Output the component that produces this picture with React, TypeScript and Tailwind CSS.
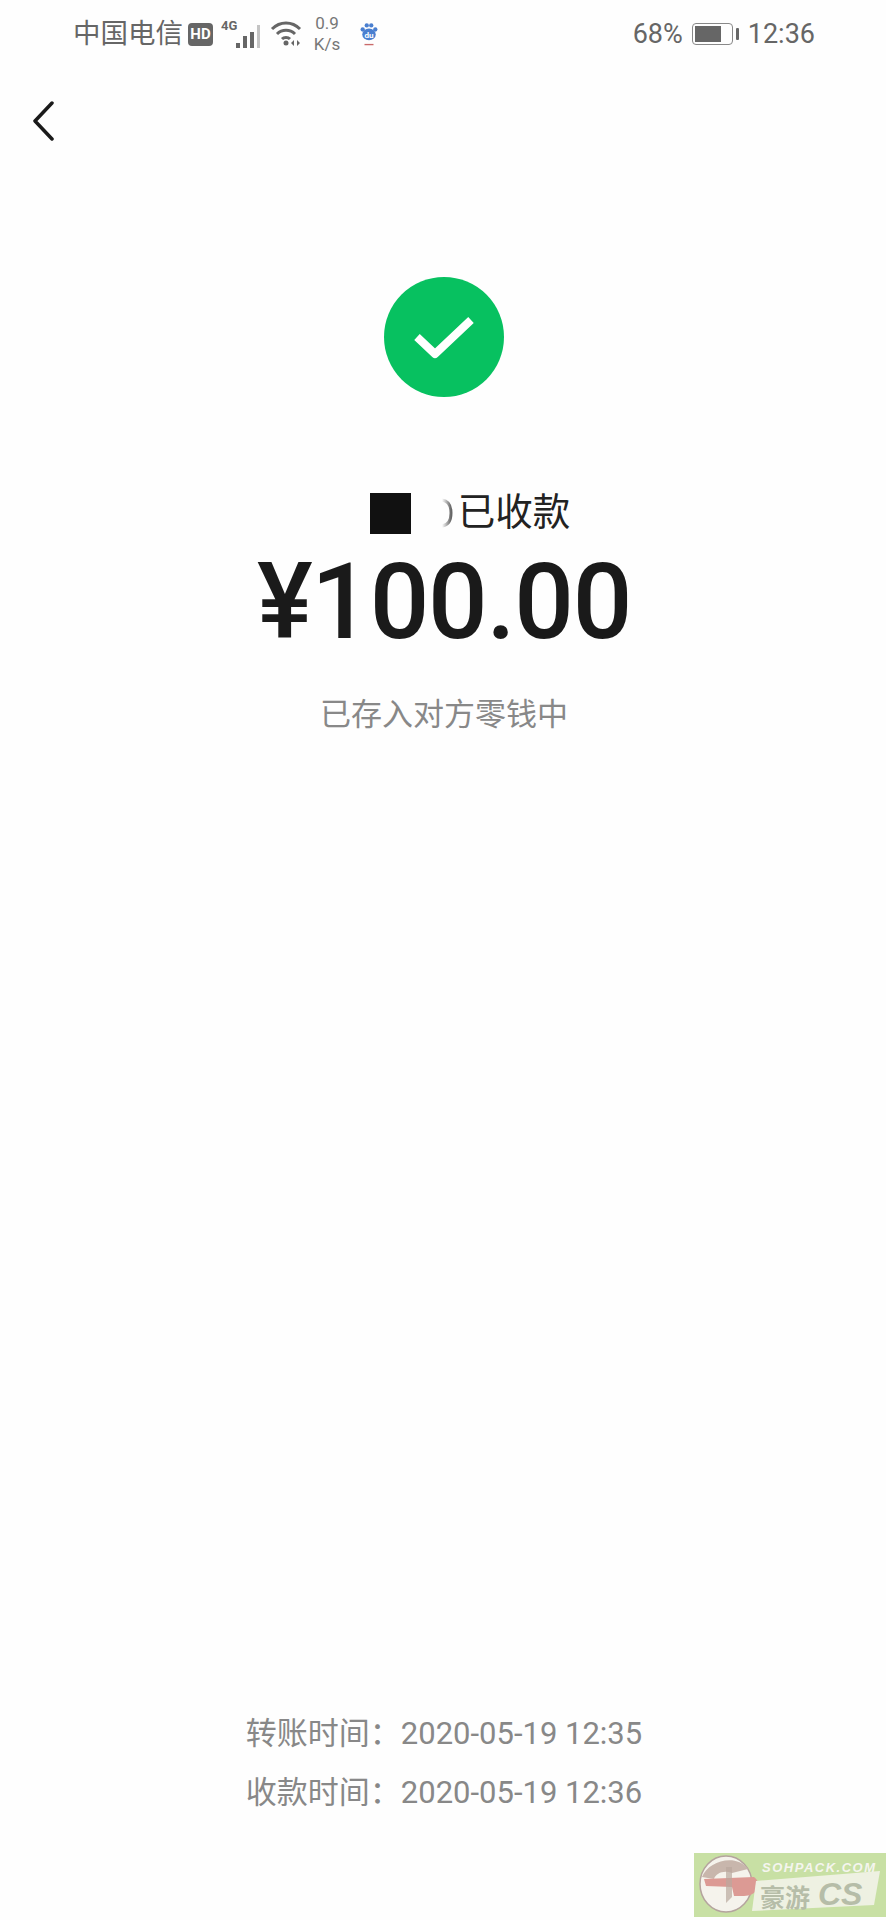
import React from "react";

const cjk = "font-['Roboto','Noto_Sans_CJK_SC',sans-serif]";

function StatusIcons() {
  return (
    <div className="flex items-center">
      {/* HD badge */}
      <div className="ml-[5px] flex h-[23px] w-[25px] items-center justify-center rounded-[4px] bg-[#666666] text-[15px] font-bold leading-none text-white">
        HD
      </div>
      {/* signal */}
      <svg width="42" height="30" viewBox="0 0 42 30" className="ml-[8px]">
        <text x="0" y="11" fontSize="13" fontWeight="700" fill="#666" fontFamily="Roboto">4G</text>
        <rect x="15" y="24" width="4" height="5" fill="#666" />
        <rect x="22" y="17" width="4" height="12" fill="#666" />
        <rect x="29" y="13" width="4" height="16" fill="#666" />
        <rect x="36" y="6" width="3" height="23" fill="#c4c4c4" />
      </svg>
      {/* wifi */}
      <svg width="32" height="26" viewBox="0 0 32 26" className="ml-[7px]">
        <path d="M2 8C10 0 22 0 30 8" fill="none" stroke="#666" strokeWidth="3" />
        <path d="M7 13C12 8 20 8 25 13" fill="none" stroke="#666" strokeWidth="3" />
        <path d="M12 18C14 16 18 16 20 18" fill="none" stroke="#666" strokeWidth="3" />
        <circle cx="16" cy="22" r="2.5" fill="#666" />
        <path d="M24 19l-3 3 3 3zM27 19l3 3-3 3z" fill="#666" />
      </svg>
      {/* speed */}
      <div className="ml-[10px] flex w-[30px] flex-col items-center text-[17px] leading-[21px] text-[#777777]">
        <span>0.9</span>
        <span>K/s</span>
      </div>
      {/* baidu paw */}
      <svg width="18" height="28" viewBox="0 0 20 28" className="ml-[18px]">
        <circle cx="3" cy="9" r="2.4" fill="#4a7fd0" />
        <circle cx="7.5" cy="4.5" r="2.4" fill="#4a7fd0" />
        <circle cx="12.5" cy="4.5" r="2.4" fill="#4a7fd0" />
        <circle cx="17" cy="9" r="2.4" fill="#4a7fd0" />
        <ellipse cx="10" cy="14.5" rx="7.5" ry="6.5" fill="#4a7fd0" />
        <text x="10" y="18" fontSize="9" fontWeight="700" textAnchor="middle" fill="#fff" fontFamily="Roboto">du</text>
        <rect x="5" y="25" width="10" height="1.5" fill="#c96a6a" />
      </svg>
    </div>
  );
}

function Battery() {
  return (
    <div className="flex items-center">
      <div className="flex h-[22px] w-[41px] items-center rounded-[4px] border border-[#888888] p-[2px]">
        <div className="h-full w-[26px] bg-[#666666]" />
      </div>
      <div className="ml-[3px] h-[12px] w-[3px] rounded-[1px] bg-[#666666]" />
    </div>
  );
}

function Watermark() {
  return (
    <div className="absolute bottom-[3px] right-0 h-[64px] w-[192px] bg-[#c8e0a4]">
      <svg width="192" height="64" viewBox="0 0 192 64">
        <ellipse cx="32" cy="31" rx="26" ry="28" fill="#f5f3ec" stroke="#b5a49e" strokeWidth="1.5" />
        <path d="M8 24C14 8 42 0 54 16L38 20C30 17 22 20 20 26z" fill="#c8b6ac" />
        <path d="M10 26L60 24C70 32 62 43 50 43L40 43L38 34L12 33z" fill="#dc9a94" />
        <path d="M32 14L38 14L38 44L32 50z" fill="#b9a89e" opacity="0.7" />
        <path d="M62 28L186 18L180 52L58 58z" fill="#eef1e2" />
        <text x="66" y="54" fontSize="25" fontWeight="700" fill="#b6bda8" fontFamily="Noto Sans CJK SC">豪游</text>
        <text x="124" y="52" fontSize="32" fontWeight="700" fontStyle="italic" fill="#b6bda8" fontFamily="Liberation Sans">CS</text>
        <text x="68" y="19" fontSize="13" fontWeight="700" fontStyle="italic" fill="#f5f5ef" fontFamily="Liberation Sans" letterSpacing="1.5">SOHPACK.COM</text>
      </svg>
    </div>
  );
}

export default function App() {
  return (
    <div className={`relative flex h-[1920px] w-[886px] flex-col bg-[#fefefe] ${cjk}`}>
      {/* status bar */}
      <div className="flex h-[68px] items-center justify-between pl-[73px] pr-[71px] text-[#666666]">
        <div className="flex items-center">
          <span className="text-[27.5px] leading-none">中国电信</span>
          <StatusIcons />
        </div>
        <div className="flex items-center">
          <span className="text-[27px] leading-none">68%</span>
          <div className="ml-[9px]">
            <Battery />
          </div>
          <span className="ml-[9px] text-[27px] leading-none">12:36</span>
        </div>
      </div>

      {/* back button */}
      <div className="flex h-[65px] items-center pl-[32px] pt-[40px]">
        <svg width="24" height="40" viewBox="0 0 24 40">
          <path d="M20 2L3 20L20 38" fill="none" stroke="#1a1a1a" strokeWidth="3.5" strokeLinecap="round" strokeLinejoin="round" />
        </svg>
      </div>

      {/* result */}
      <div className="flex flex-col items-center pl-[2px] pt-[144px]">
        <div className="flex h-[120px] w-[120px] items-center justify-center rounded-full bg-[#07c160]">
          <svg width="64" height="48" viewBox="0 0 64 48">
            <path d="M5 24L23 41L59 7" fill="none" stroke="#ffffff" strokeWidth="8" strokeLinejoin="round" />
          </svg>
        </div>

        <div className="mt-[94px] flex h-[44px] items-center pl-[52px] text-[37.5px] leading-none text-[#222222]">
          <div className="h-[41px] w-[41px] bg-[#111111]" />
          {/* bit of the hidden name left showing beside the cover */}
          <svg width="14" height="30" viewBox="0 0 14 30" className="ml-[28px] mr-[5px]">
            <defs>
              <linearGradient id="nameFade" x1="0" x2="1" y1="0" y2="0">
                <stop offset="0" stopColor="#ffffff" />
                <stop offset="1" stopColor="#666666" />
              </linearGradient>
            </defs>
            <path d="M3 2C10 3 12 9 12 15C12 21 10 27 3 28" fill="none" stroke="url(#nameFade)" strokeWidth="3" />
          </svg>
          <span>已收款</span>
        </div>

        <div className="mt-[12px] text-[105px] font-medium leading-[112px] tracking-[-1.3px] text-[#1a1a1a]">
          ¥100.00
        </div>

        <div className="mt-[36px] text-[31px] leading-[40px] text-[#888888]">已存入对方零钱中</div>
      </div>

      {/* times */}
      <div className="mt-auto mb-[107px] flex flex-col items-center gap-[19px] pl-[2px] text-[31px] leading-[40px] text-[#888888]">
        <span>转账时间：2020-05-19 12:35</span>
        <span>收款时间：2020-05-19 12:36</span>
      </div>

      <Watermark />
    </div>
  );
}
